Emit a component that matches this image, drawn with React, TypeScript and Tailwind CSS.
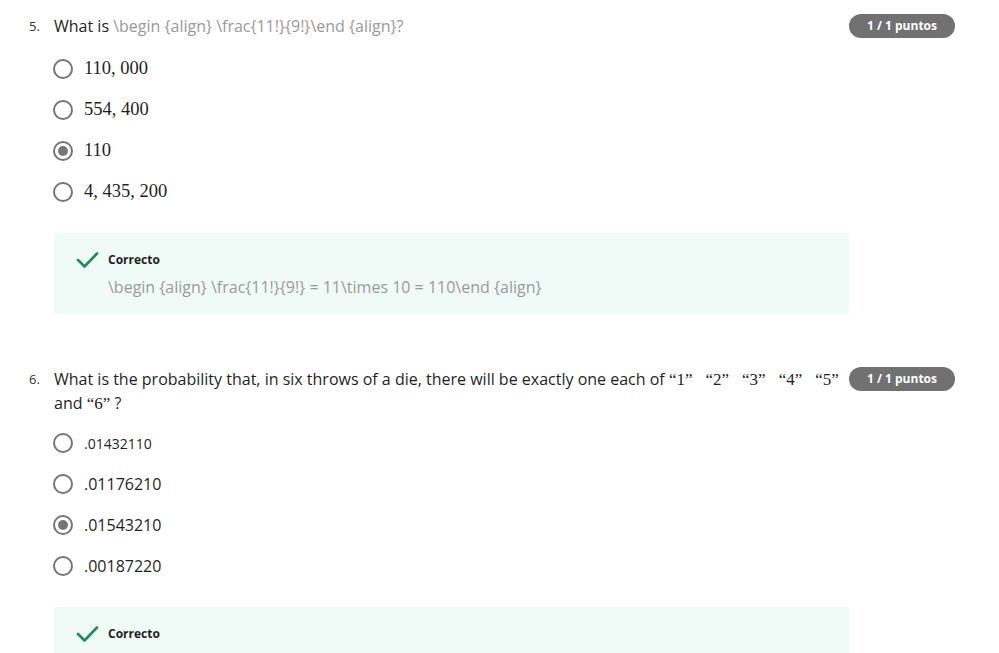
import React from "react";

const sans = "font-['Open_Sans',_'Liberation_Sans',_sans-serif]";
const serif = "font-['Liberation_Serif',_'DejaVu_Serif',_serif]";

type OptionProps = {
  label: string;
  checked?: boolean;
  math?: boolean;
  small?: boolean;
};

function Radio({ checked }: { checked?: boolean }) {
  return (
    <div className="w-[20px] h-[20px] rounded-full border-2 border-[#757575] flex items-center justify-center shrink-0">
      {checked && <div className="w-[10px] h-[10px] rounded-full bg-[#757575]" />}
    </div>
  );
}

function Option({ label, checked, math, small }: OptionProps) {
  return (
    <div className={"flex items-center " + (small ? "h-[40px]" : "h-[41px]")}>
      <div className="ml-[-1px]">
        <Radio checked={checked} />
      </div>
      <div
        className={
          "ml-[11px] text-[#1f1f1f] " +
          (math ? serif + " text-[18.5px]" : sans + (small ? " text-[14px]" : " text-[16px]"))
        }
      >
        {label}
      </div>
    </div>
  );
}

function Badge() {
  return (
    <div className="shrink-0 w-[106px] h-[24px] rounded-full bg-[#717171] text-white text-[12px] font-bold flex items-center justify-center">
      1 / 1 puntos
    </div>
  );
}

function Check() {
  return (
    <svg width="23" height="18" viewBox="0 0 23 18" className="shrink-0">
      <polyline
        points="2,9 8.5,15.5 21,2.5"
        fill="none"
        stroke="#1f8a5b"
        strokeWidth="2.6"
        strokeLinecap="round"
        strokeLinejoin="round"
      />
    </svg>
  );
}

function Feedback({ children }: { children?: React.ReactNode }) {
  return (
    <div className="w-[795px] bg-[#f0faf7] pl-[22px] pt-[17px] pb-[15px]">
      <div className="flex">
        <div className="pt-[1px]">
          <Check />
        </div>
        <div className="ml-[9px]">
          <div className="text-[12px] font-bold text-[#1f1f1f] leading-[20px]">Correcto</div>
          {children && (
            <div className="mt-[5px] text-[16px] text-[#9a9a9a] leading-[24px]">{children}</div>
          )}
        </div>
      </div>
    </div>
  );
}

function Quote({ n, last }: { n: string; last?: boolean }) {
  return (
    <span className={serif + " text-[17px] leading-none " + (last ? "" : "mr-[13px]")}>
      {"\u201c" + n + "\u201d"}
    </span>
  );
}

export default function App() {
  return (
    <div className={sans + " bg-white w-[999px] h-[653px] overflow-hidden pl-[29px] pr-[44px] pt-[14px]"}>
      {/* question 5 */}
      <div className="flex">
        <div className="w-[25px] text-[13px] text-[#333] leading-[24px]">5.</div>
        <div className="flex-1">
          <div className="flex">
            <div className="flex-1 text-[16px] leading-[24px] text-[#1f1f1f]">
              What is{" "}
              <span className="text-[#999]">\begin {"{align}"} \frac{"{11!}{9!}"}\end {"{align}"}?</span>
            </div>
            <Badge />
          </div>
          <div className="mt-[10px]">
            <Option label="110, 000" math />
            <Option label="554, 400" math />
            <Option label="110" math checked />
            <Option label="4, 435, 200" math />
          </div>
          <div className="mt-[21px]">
            <Feedback>
              \begin {"{align}"} \frac{"{11!}{9!}"} = 11\times 10 = 110\end {"{align}"}
            </Feedback>
          </div>
        </div>
      </div>

      {/* question 6 */}
      <div className="flex mt-[53px]">
        <div className="w-[25px] text-[13px] text-[#333] leading-[24px]">6.</div>
        <div className="flex-1">
          <div className="flex">
            <div className="flex-1 text-[16px] leading-[24px] text-[#1f1f1f]">
              What is the probability that, in six throws of a die, there will be exactly one each of{" "}
              <span className="whitespace-nowrap">
                <Quote n="1" />
                <Quote n="2" />
                <Quote n="3" />
                <Quote n="4" />
                <Quote n="5" last />
              </span>
              <br />
              and <Quote n="6" last /> ?
            </div>
            <Badge />
          </div>
          <div className="mt-[8px]">
            <Option label=".01432110" small />
            <Option label=".01176210" />
            <Option label=".01543210" checked />
            <Option label=".00187220" />
          </div>
          <div className="mt-[21px]">
            <Feedback />
          </div>
        </div>
      </div>
    </div>
  );
}
